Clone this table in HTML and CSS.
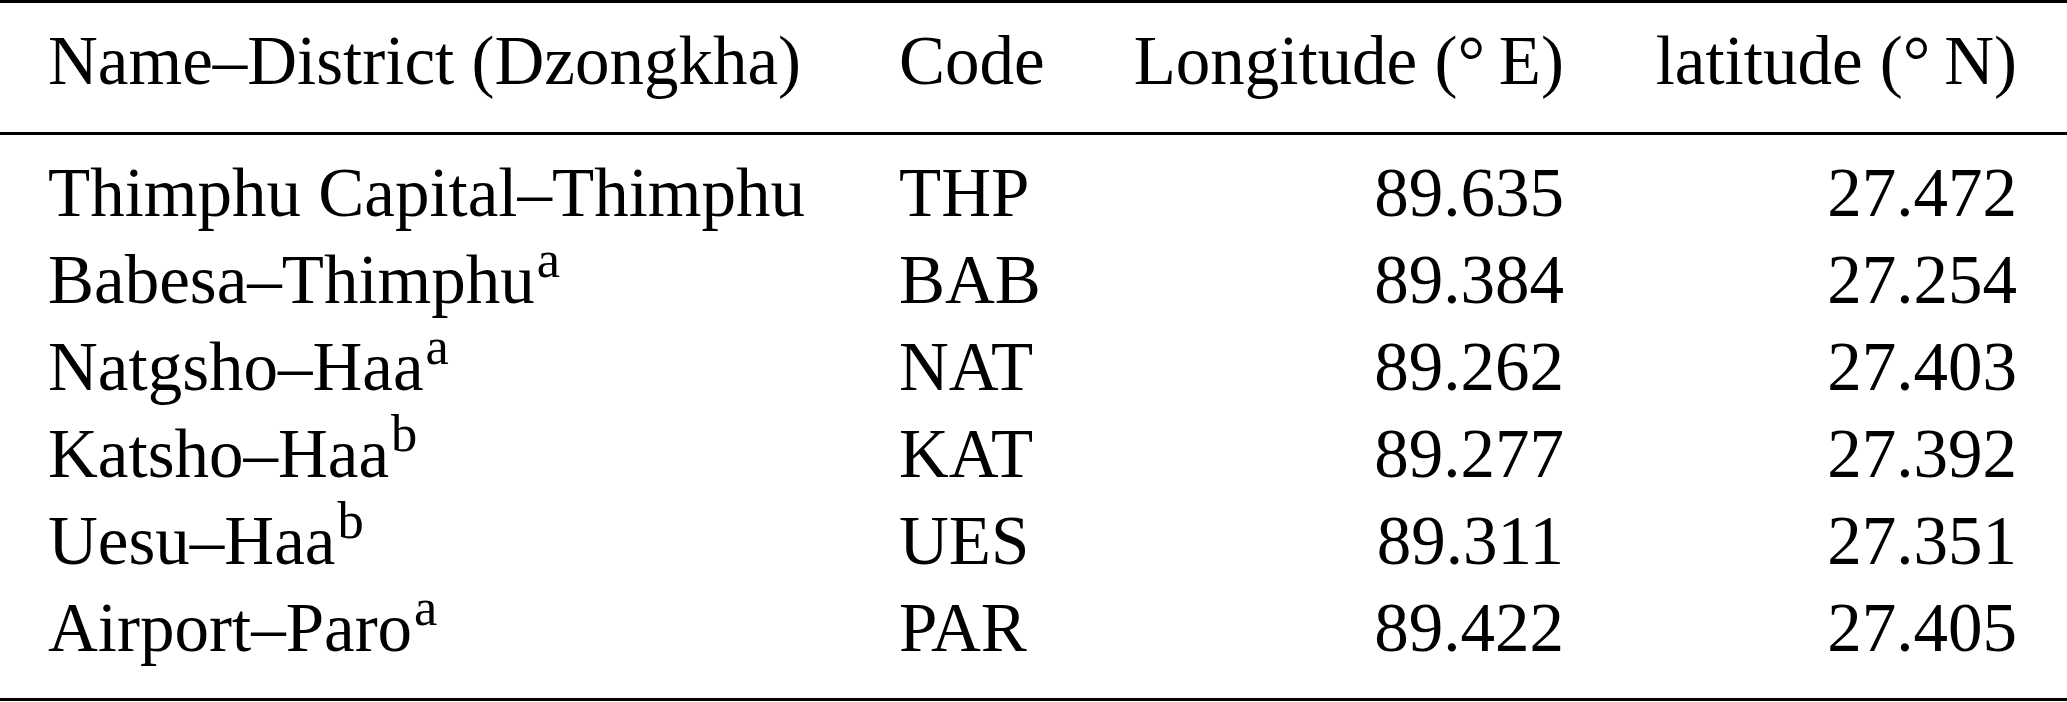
FILE: index.html
```html
<!DOCTYPE html>
<html lang="en">
<head>
    <meta charset="UTF-8">
    <meta name="viewport" content="width=device-width, initial-scale=1.0">
    <title>Stations</title>
    <link rel="stylesheet" href="styles.css">
</head>
<body>
    <table class="stations">
        <colgroup>
            <col class="col-name">
            <col class="col-code">
            <col class="col-lon">
            <col class="col-lat">
        </colgroup>
        <thead>
            <tr>
                <th class="name">Name&ndash;District (Dzongkha)</th>
                <th class="code">Code</th>
                <th class="num">Longitude (&deg;&thinsp;E)</th>
                <th class="num last">latitude (&deg;&thinsp;N)</th>
            </tr>
        </thead>
        <tbody>
            <tr>
                <td class="name">Thimphu Capital&ndash;Thimphu</td>
                <td class="code">THP</td>
                <td class="num">89.635</td>
                <td class="num last">27.472</td>
            </tr>
            <tr>
                <td class="name">Babesa&ndash;Thimphu<sup>a</sup></td>
                <td class="code">BAB</td>
                <td class="num">89.384</td>
                <td class="num last">27.254</td>
            </tr>
            <tr>
                <td class="name">Natgsho&ndash;Haa<sup>a</sup></td>
                <td class="code">NAT</td>
                <td class="num">89.262</td>
                <td class="num last">27.403</td>
            </tr>
            <tr>
                <td class="name">Katsho&ndash;Haa<sup>b</sup></td>
                <td class="code">KAT</td>
                <td class="num">89.277</td>
                <td class="num last">27.392</td>
            </tr>
            <tr>
                <td class="name">Uesu&ndash;Haa<sup>b</sup></td>
                <td class="code">UES</td>
                <td class="num">89.311</td>
                <td class="num last">27.351</td>
            </tr>
            <tr>
                <td class="name">Airport&ndash;Paro<sup>a</sup></td>
                <td class="code">PAR</td>
                <td class="num">89.422</td>
                <td class="num last">27.405</td>
            </tr>
        </tbody>
    </table>
</body>
</html>
```

FILE: styles.css
```css
body {
    margin: 0;
    background-color: #fff;
    color: #000;
    font-family: "Liberation Serif", "Times New Roman", serif;
}
.stations {
    width: 2067px;
    table-layout: fixed;
    border-collapse: separate;
    border-spacing: 0;
    font-size: 69px;
    line-height: 69px;
}
.col-name {
    width: 899px;
}
.col-code {
    width: 200px;
}
.col-lon {
    width: 465px;
}
.col-lat {
    width: 503px;
}
.stations th,
.stations td {
    padding: 9px 0;
    font-weight: normal;
    white-space: nowrap;
    vertical-align: baseline;
}
.stations th {
    padding-top: 24px;
    padding-bottom: 36px;
    border-top: 3px solid #000;
    border-bottom: 3px solid #000;
}
.stations tbody tr:first-child td {
    padding-top: 24px;
}
.stations tbody tr:last-child td {
    padding-bottom: 35px;
    border-bottom: 3px solid #000;
}
.name {
    text-align: left;
    padding-left: 48px !important;
}
.code {
    text-align: left;
}
.num {
    text-align: right;
}
.last {
    padding-right: 50px !important;
}
sup {
    font-size: 0.76em;
    line-height: 0;
    vertical-align: 0.5em;
    margin-left: 2px;
}
```
